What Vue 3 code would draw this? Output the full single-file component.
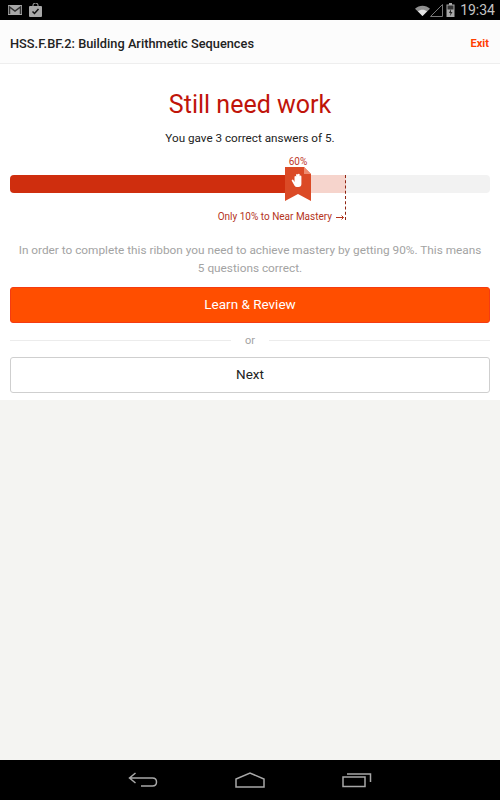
<script setup>
const score = 60
const target = 70
</script>

<template>
  <div class="screen">
    <div class="status-bar">
      <div class="status-left">
        <svg width="14" height="12" viewBox="0 0 14 12">
          <rect x="0" y="1" width="14" height="10" fill="#a8a8a8" />
          <path d="M1.5 10V3L7 7l5.500-4v7" fill="none" stroke="#333" stroke-width="1.500" />
        </svg>
        <svg width="13" height="14" viewBox="0 0 13 14">
          <path d="M4 3V2a2.500 2 0 0 1 5 0v1" fill="none" stroke="#a8a8a8" stroke-width="1" />
          <rect x="0" y="3" width="13" height="11" rx="1" fill="#a8a8a8" />
          <path d="M3.500 8.500l2 2 4-4.500" fill="none" stroke="#111" stroke-width="1.500" />
        </svg>
      </div>
      <div class="status-right">
        <svg class="wifi" width="15" height="11" viewBox="0 0 18 13">
          <path d="M0 4.500C5 -.5 13 -.5 18 4.500L9 13z" fill="#8f8f8f" />
          <path d="M3.500 7.500C6.500 5 11.500 5 14.500 7.500L9 13z" fill="#e4e4e4" />
        </svg>
        <svg class="signal" width="13" height="13" viewBox="0 0 13 13">
          <path d="M12.500.5v12H.5z" fill="none" stroke="#777" stroke-width="1" />
        </svg>
        <svg class="battery" width="9" height="14" viewBox="0 0 8 14">
          <rect x="2.500" y="0" width="3" height="2" fill="#a8a8a8" />
          <rect x="0" y="1.500" width="8" height="12.500" fill="#a8a8a8" />
          <rect x="1" y="2.500" width="6" height="4" fill="#333" />
          <path d="M4.500 6L2.500 10h1.500l-.5 3 2.500-4H4.500z" fill="#222" />
        </svg>
        <span class="clock">19:34</span>
      </div>
    </div>

    <header class="top-bar">
      <span class="lesson">HSS.F.BF.2: Building Arithmetic Sequences</span>
      <span class="exit">Exit</span>
    </header>

    <main class="result">
      <h1>Still need work</h1>
      <p class="score-text">You gave 3 correct answers of 5.</p>

      <div class="progress">
        <div class="track">
          <div class="fill" :style="{ width: score + '%' }"></div>
          <div class="to-go" :style="{ width: (target - score) + '%' }"></div>
        </div>
        <div class="marker" :style="{ left: target + '%' }"></div>
        <div class="ribbon">
          <span class="pct">{{ score }}%</span>
          <svg width="26" height="34" viewBox="0 0 26 34">
            <path d="M0 0H19L26 7V34L13 27L0 34Z" fill="#db4a26" />
            <path d="M19 0L26 7H19Z" fill="#ee8c70" />
            <path d="M9.500 15V10q0-.9.8-.9t.8.9v3.500V8q0-.9.9-.9t.9.9v5V7.600q0-.9.9-.9t.9.9v5.900V9.500q0-.9.850-.9t.850.9V17q0 3-3 3h-1.500q-1.500 0-2.500-1.500L6.900 14q-.5-.9.2-1.300t1.300.3z" fill="#fff" />
          </svg>
        </div>
        <div class="mastery-note">
          <span>Only 10% to Near Mastery</span>
          <svg width="8" height="5" viewBox="0 0 8 5">
            <path d="M0 2.500H7.500M5.500.5l2 2-2 2" fill="none" stroke="#b5341c" stroke-width="1" />
          </svg>
        </div>
      </div>

      <p class="explain">In order to complete this ribbon you need to achieve mastery by getting 90%. This means 5 questions correct.</p>

      <button class="btn primary">Learn &amp; Review</button>
      <div class="divider"><span>or</span></div>
      <button class="btn secondary">Next</button>
    </main>

    <div class="empty"></div>

    <nav class="nav-bar">
      <svg width="30" height="16" viewBox="0 0 30 16">
        <path d="M7.500 1L1.500 6l6 5M2 6H24.500Q28.500 6 28.500 10T24.500 14H13" fill="none" stroke="#a8a8a8" stroke-width="1.500" />
      </svg>
      <svg width="30" height="16" viewBox="0 0 30 16">
        <path d="M1 15V7L15 1L29 7V15Z" fill="none" stroke="#a8a8a8" stroke-width="1.500" />
      </svg>
      <svg width="30" height="16" viewBox="0 0 30 16">
        <rect x="1" y="5" width="22" height="9.500" fill="none" stroke="#a8a8a8" stroke-width="1.500" />
        <path d="M5 2H28.500V10" fill="none" stroke="#a8a8a8" stroke-width="1.500" />
      </svg>
    </nav>
  </div>
</template>

<style scoped>
.screen {
  width: 500px;
  height: 800px;
  display: flex;
  flex-direction: column;
  background: #f4f4f2;
  font-family: Roboto, "Liberation Sans", sans-serif;
  overflow: hidden;
}
.status-bar {
  height: 20px;
  background: #000;
  display: flex;
  justify-content: space-between;
  align-items: center;
  padding: 0 5px 0 8px;
}
.status-left,
.status-right {
  display: flex;
  align-items: center;
}
.status-left {
  gap: 7px;
}
.battery {
  margin-left: 3px;
}
.clock {
  color: #c4c4c4;
  font-size: 14px;
  margin-left: 5px;
}
.top-bar {
  height: 44px;
  box-sizing: border-box;
  background: #fcfcfc;
  border-bottom: 1px solid #eeeeee;
  display: flex;
  justify-content: space-between;
  align-items: center;
  padding: 4px 11px 0 10px;
}
.lesson {
  font-size: 12.800px;
  font-weight: 500;
  color: #222;
}
.exit {
  font-size: 11px;
  font-weight: 700;
  color: #ff3d00;
}
.result {
  background: #fff;
  height: 336px;
  box-sizing: border-box;
  padding: 26px 10px 0;
  display: flex;
  flex-direction: column;
}
h1 {
  margin: 0;
  text-align: center;
  font-size: 25px;
  font-weight: 400;
  line-height: 30px;
  color: #c0140a;
}
.score-text {
  margin: 10px 0 0;
  text-align: center;
  font-size: 11.700px;
  line-height: 16px;
  color: #222;
}
.progress {
  position: relative;
  margin-top: 29px;
  height: 44px;
}
.track {
  height: 18px;
  background: #f2f2f2;
  border-radius: 4px;
  overflow: hidden;
  display: flex;
}
.fill {
  background: #cf2e0e;
}
.to-go {
  background: #f6d4cc;
}
.marker {
  position: absolute;
  top: 0;
  height: 45px;
  margin-left: -1px;
  border-left: 1px dashed #8f2412;
}
.ribbon {
  position: absolute;
  left: 275px;
  top: -8px;
  width: 26px;
}
.ribbon svg {
  display: block;
}
.pct {
  position: absolute;
  top: -11px;
  left: -7px;
  width: 40px;
  text-align: center;
  font-size: 10px;
  line-height: 12px;
  color: #c0392b;
}
.mastery-note {
  position: absolute;
  right: 146px;
  top: 36px;
  display: flex;
  align-items: center;
  gap: 4px;
  font-size: 10px;
  line-height: 12px;
  color: #b5341c;
  white-space: nowrap;
}
.explain {
  margin: 22px 0 0;
  padding: 0 8px;
  text-align: center;
  font-size: 11.800px;
  line-height: 18px;
  color: #a3a3a3;
}
.btn {
  display: block;
  width: 100%;
  height: 36px;
  box-sizing: border-box;
  border-radius: 3px;
  font-family: inherit;
  font-size: 13.500px;
  padding: 0 0 2px;
}
.primary {
  margin-top: 10px;
  background: #ff4e00;
  border: 1px solid #f53b12;
  color: #fff;
}
.divider {
  height: 34px;
  display: flex;
  align-items: center;
  gap: 14px;
  color: #a3a3a3;
  font-size: 11px;
}
.divider::before,
.divider::after {
  content: "";
  flex: 1;
  border-top: 1px solid #ececec;
}
.secondary {
  background: #fff;
  border: 1px solid #cfcfcf;
  color: #222;
}
.empty {
  flex: 1;
}
.nav-bar {
  height: 40px;
  background: #000;
  display: flex;
  justify-content: center;
  align-items: center;
  gap: 77px;
}
</style>
